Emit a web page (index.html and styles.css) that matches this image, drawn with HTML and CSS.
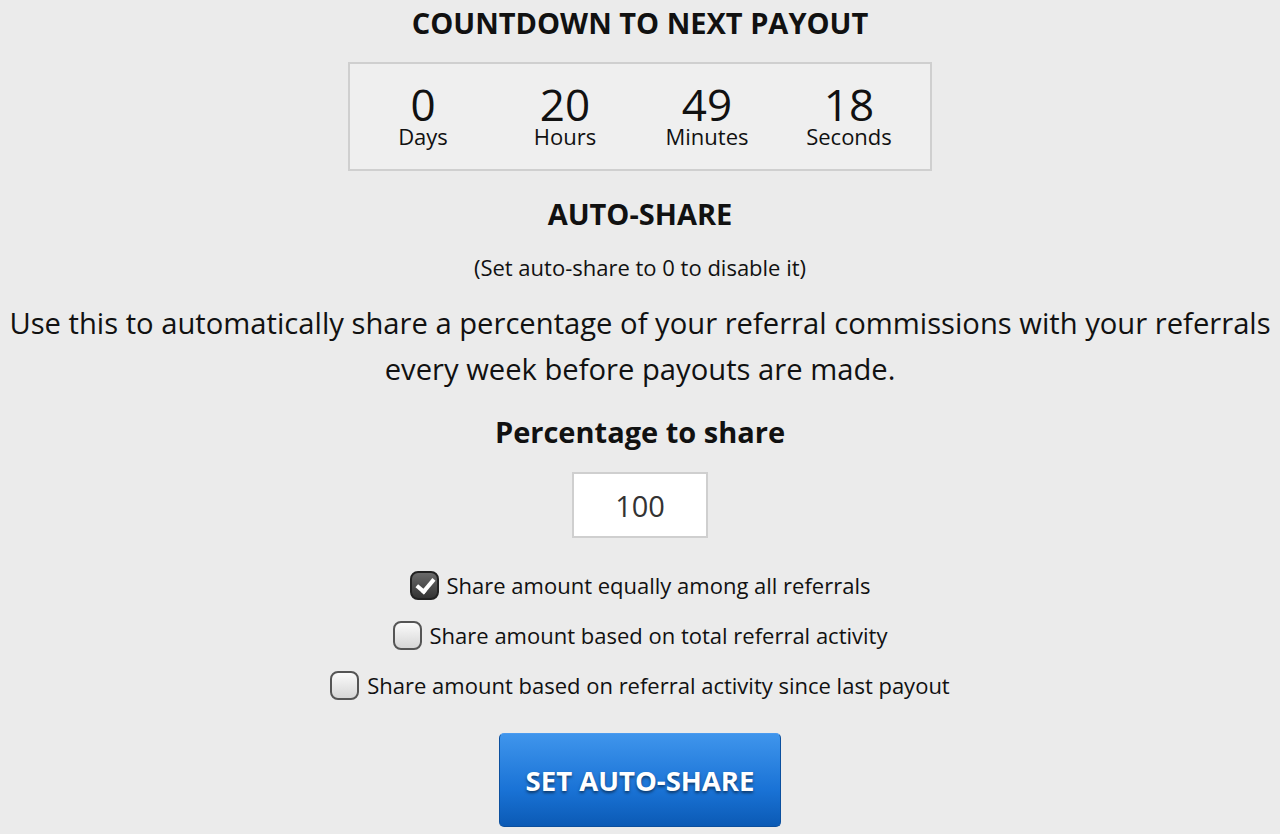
FILE: index.html
```html
<!DOCTYPE html>
<html lang="en">
<head>
  <meta charset="UTF-8">
  <meta name="viewport" content="width=device-width, initial-scale=1.0">
  <title>Auto-Share</title>
  <link rel="stylesheet" href="styles.css">
</head>
<body>
  <div class="page">
    <h2 class="title">COUNTDOWN TO NEXT PAYOUT</h2>
    <div class="countdown">
      <div class="unit"><span class="num">0</span><span class="label">Days</span></div>
      <div class="unit"><span class="num">20</span><span class="label">Hours</span></div>
      <div class="unit"><span class="num">49</span><span class="label">Minutes</span></div>
      <div class="unit"><span class="num">18</span><span class="label">Seconds</span></div>
    </div>

    <h2 class="title title-share">AUTO-SHARE</h2>
    <p class="hint">(Set auto-share to 0 to disable it)</p>
    <p class="desc">Use this to automatically share a percentage of your referral commissions with your referrals every week before payouts are made.</p>

    <form class="share-form" action="#" method="POST">
      <label class="pct-label" for="pct">Percentage to share</label>
      <input class="pct-input" type="text" id="pct" name="pct" value="100">

      <div class="options">
        <label class="option"><input type="checkbox" name="mode" checked><span class="box"></span>Share amount equally among all referrals</label>
        <label class="option"><input type="checkbox" name="mode"><span class="box"></span>Share amount based on total referral activity</label>
        <label class="option"><input type="checkbox" name="mode"><span class="box"></span>Share amount based on referral activity since last payout</label>
      </div>

      <button type="submit" class="btn">SET AUTO-SHARE</button>
    </form>
  </div>
</body>
</html>
```

FILE: styles.css
```css
body {
  font-family: 'Open Sans', 'Noto Sans', sans-serif;
  background: #ebebeb;
  color: #111;
  margin: 0;
  padding: 0;
}
.page {
  display: flex;
  flex-direction: column;
  align-items: center;
  text-align: center;
  padding-top: 4px;
}
.title {
  font-size: 29px;
  font-weight: 700;
  margin: 0;
  line-height: 38px;
}
.countdown {
  display: flex;
  margin-top: 20px;
  width: 578px;
  height: 100px;
  padding: 0 0 5px 2px;
  border: 2px solid #cfcfcf;
  background: #efefef;
  justify-content: flex-start;
  align-items: center;
}
.unit {
  width: 142px;
  display: flex;
  flex-direction: column;
  align-items: center;
}
.num {
  font-size: 44px;
  line-height: 44px;
}
.label {
  font-size: 22px;
  line-height: 22px;
  margin-top: -1px;
}
.title-share {
  margin-top: 24px;
}
.hint {
  font-size: 22px;
  margin: 21px 0 0;
  line-height: 26px;
}
.desc {
  font-size: 29.2px;
  line-height: 46px;
  margin: 20px 0 0;
}
.share-form {
  display: flex;
  flex-direction: column;
  align-items: center;
}
.pct-label {
  font-size: 29px;
  font-weight: 700;
  margin-top: 20px;
  line-height: 40px;
}
.pct-input {
  margin-top: 20px;
  width: 136px;
  height: 66px;
  box-sizing: border-box;
  border: 2px solid #cfcfcf;
  background: #fff;
  text-align: center;
  font-family: inherit;
  font-size: 29px;
  color: #333;
}
.options {
  margin-top: 32px;
  display: flex;
  flex-direction: column;
  align-items: center;
  gap: 20px;
}
.option {
  display: flex;
  align-items: center;
  font-size: 22px;
  line-height: 30px;
  cursor: pointer;
}
.option input {
  display: none;
}
.box {
  width: 29px;
  height: 29px;
  box-sizing: border-box;
  border: 2px solid #555;
  border-radius: 8px;
  background: linear-gradient(#fbfbfb, #d6d6d6);
  margin-right: 8px;
  position: relative;
}
.option input:checked + .box {
  background: linear-gradient(#6a6a6a, #333);
  border-color: #222;
}
.option input:checked + .box::after {
  content: "";
  position: absolute;
  left: 8px;
  top: 2px;
  width: 7px;
  height: 14px;
  border: solid #fff;
  border-width: 0 4px 4px 0;
  transform: rotate(40deg);
}
.btn {
  margin-top: 33px;
  width: 282px;
  height: 94px;
  border: 1px solid #0b4f9e;
  border-top-color: #4a9bf0;
  border-radius: 5px;
  background: linear-gradient(#3f95ec, #1a73d6 60%, #0b5ab5);
  color: #fff;
  font-family: inherit;
  font-size: 27.5px;
  font-weight: 700;
  text-shadow: 0 2px 3px rgba(0, 0, 0, 0.5);
  cursor: pointer;
}
```
